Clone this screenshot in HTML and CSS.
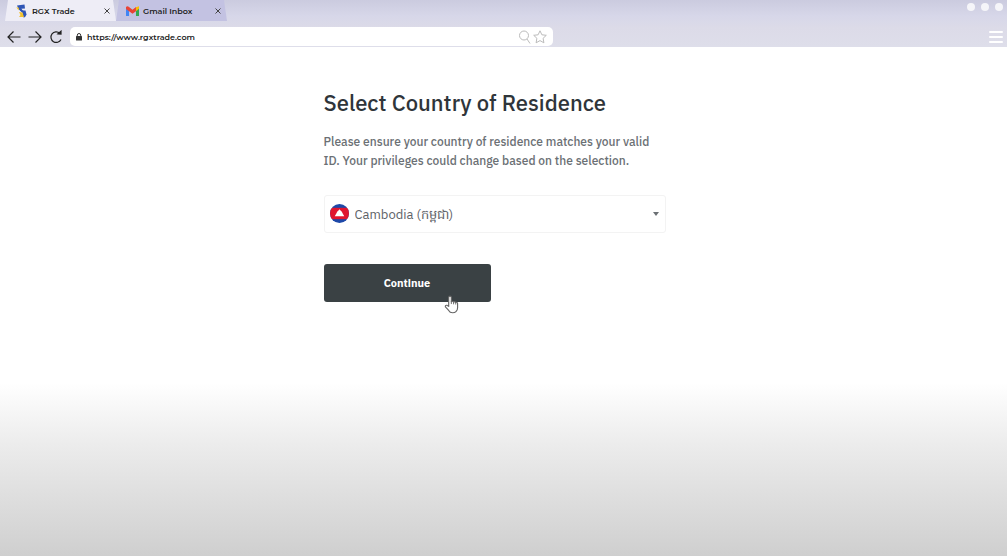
FILE: index.html
```
<!DOCTYPE html>
<html lang="en">
<head>
  <meta charset="UTF-8">
  <meta name="viewport" content="width=device-width, initial-scale=1.0">
  <title>RGX Trade</title>
  <link rel="stylesheet" href="styles.css">
</head>
<body>
  <header class="browser">
    <div class="tab-row">
      <nav class="tabs">
        <div class="tab active">
          <svg class="tab-icon" viewBox="0 0 12 14" aria-hidden="true">
            <path d="M1.500 1.500 9 .5l.5 4-4 .3 3.500 3-2 1.200-4-4z" fill="#2f55b5"/>
            <path d="M.8 3.200 3.800 3.800 3 6.200z" fill="#f2c230"/>
            <path d="M3 3.800h2.500L7 7.500 5 7z" fill="#2f55b5"/>
            <path d="M7.500 6.500h2.500l1 4-1.500 2.800H7.500L7 9.500z" fill="#2f55b5"/>
            <path d="M3.500 8 7 8.500l1.500 4.500H3.500l1.500-2z" fill="#f2c230"/>
          </svg>
          <a class="tab-link" href="#">RGX Trade</a>
          <button class="tab-close" type="button" aria-label="Close RGX Trade">
            <svg viewBox="0 0 6 6"><path d="M.5.5l5 5M5.500.5l-5 5"/></svg>
          </button>
        </div>
        <div class="tab">
          <svg class="tab-icon" viewBox="0 0 12 10" aria-hidden="true">
            <path d="M0 2v7.500h2.800V3z" fill="#4285f4"/>
            <path d="M12 2v7.500H9.200V3z" fill="#34a853"/>
            <path d="M9.200 1.500 12 .5V3L9.200 5.200z" fill="#fbbc04"/>
            <path d="M0 1.500Q.8 0 2.500 1L6 3.800 9.200 1.200v4L6 7.600 0 3.200z" fill="#ea4335"/>
          </svg>
          <a class="tab-link" href="#">Gmail Inbox</a>
          <button class="tab-close" type="button" aria-label="Close Gmail Inbox">
            <svg viewBox="0 0 6 6"><path d="M.5.5l5 5M5.500.5l-5 5"/></svg>
          </button>
        </div>
      </nav>
      <div class="dots"><span></span><span></span><span></span></div>
    </div>

    <div class="toolbar">
      <button class="nav-button" type="button" aria-label="Back">
        <svg viewBox="0 0 14 14"><path d="M13.500 7H1M6.500 1.500 1 7l5.500 5.500"/></svg>
      </button>
      <button class="nav-button" type="button" aria-label="Forward">
        <svg viewBox="0 0 14 14"><path d="M.5 7H13M7.500 1.500 13 7l-5.500 5.500"/></svg>
      </button>
      <button class="nav-button" type="button" aria-label="Reload">
        <svg viewBox="0 0 14 14"><path d="M10.800 3.200A5.300 5.300 0 1 0 12 9.500"/><path d="M9 3.800 12 4V1.200z" fill="#222"/></svg>
      </button>
      <div class="address">
        <svg class="lock" viewBox="0 0 6 8" aria-hidden="true">
          <path d="M1.300 3.500V2.200a1.700 1.700 0 0 1 3.400 0v1.300" fill="none" stroke="#333"/>
          <rect y="3" width="6" height="4.500" rx=".6" fill="#333"/>
        </svg>
        <input class="address-input" type="text" value="https://www.rgxtrade.com" aria-label="Address">
        <button class="address-button" type="button" aria-label="Search">
          <svg viewBox="0 0 14 14"><circle cx="6" cy="5.500" r="4.500"/><path d="M9 9l3 4.500"/></svg>
        </button>
        <button class="address-button" type="button" aria-label="Bookmark">
          <svg viewBox="0 0 14 14"><path d="M7 .8l1.900 4 4.400.5-3.200 3 .8 4.500L7 10.600l-3.900 2.200.8-4.500-3.200-3 4.400-.5z"/></svg>
        </button>
      </div>
      <button class="menu-button" type="button" aria-label="Menu">
        <span></span><span></span><span></span>
      </button>
    </div>
  </header>

  <main class="page">
    <form class="residence">
      <h1>Select Country of Residence</h1>
      <p>Please ensure your country of residence matches your valid ID. Your privileges could change based on the selection.</p>
      <div class="country">
        <svg class="flag" viewBox="0 0 20 20" aria-hidden="true">
          <clipPath id="round"><circle cx="10" cy="10" r="10"/></clipPath>
          <g clip-path="url(#round)">
            <rect width="20" height="20" fill="#1d48a8"/>
            <rect y="4" width="20" height="12" fill="#e0162f"/>
            <path d="M10 5.500l1.300 1.700 1 .8 1.200 2.200 1.500 2.800H5l1.500-2.800L7.700 8l1-.8z" fill="#fff"/>
          </g>
        </svg>
        <select class="country-select" aria-label="Country of residence">
          <option>Cambodia (កម្ពុជា)</option>
        </select>
        <svg class="caret" viewBox="0 0 6 4" aria-hidden="true"><path d="M0 0h6L3 4z" fill="#6b7074"/></svg>
      </div>
      <div class="actions">
        <button class="continue" type="button">Continue</button>
        <svg class="cursor" viewBox="0 0 16 20" aria-hidden="true">
          <path d="M5 12V2.500a1.400 1.400 0 0 1 2.800 0V7q1.200-1 2.300.3 1.300-.8 2.200.5 2-.6 2.200 1.200v4.500q0 2.500-1.700 4-1.300 1.300-3.600 1.300-3 0-4.200-2.500L1.500 12.500Q1 10.500 3 10.800z" fill="#fff" stroke="#666" stroke-width="1.200" stroke-linejoin="round"/>
          <path d="M7.800 6.500v3M10.200 7.300v2.500M12.500 8v2" stroke="#666" fill="none"/>
        </svg>
      </div>
    </form>
  </main>
</body>
</html>
```
FILE: styles.css
```
* {
  box-sizing: border-box;
}
body {
  display: flex;
  flex-direction: column;
  min-height: 100vh;
  margin: 0;
  font-family: "IBM Plex Sans", Roboto, sans-serif;
  color: #2f353a;
}
button {
  padding: 0;
  border: 0;
  background: none;
  cursor: pointer;
}
svg {
  display: block;
}

/* Browser bar */
.browser {
  height: 47px;
  background: linear-gradient(#cbcbdf 0, #d7d7e9 16px, #dcdbe8 28px, #dedeea 100%);
  font-family: Montserrat, Inter, sans-serif;
}
.tab-row {
  display: flex;
  justify-content: space-between;
  height: 27px;
  padding: 0 4px 0 5px;
}
.tabs {
  display: flex;
}
.tab {
  display: flex;
  align-items: center;
  width: 111px;
  height: 21px;
  padding: 0 6px 0 10px;
  background: #c3c2e2;
  clip-path: polygon(3px 0, calc(100% - 3px) 0, 100% 100%, 0 100%);
}
.tab.active {
  background: #eeedf6;
}
.tab-icon {
  width: 13px;
  height: 14px;
  margin-right: 4px;
}
.tab-link {
  flex: 1;
  color: #222;
  font-size: 8px;
  font-weight: 600;
  text-decoration: none;
  white-space: nowrap;
}
.tab-close svg {
  width: 6px;
  height: 6px;
  stroke: #444;
  stroke-width: 1;
}
.dots {
  display: flex;
  gap: 6px;
  padding-top: 3px;
}
.dots span {
  width: 8px;
  height: 8px;
  border-radius: 50%;
  background: #f5f5f9;
}
.toolbar {
  display: flex;
  align-items: center;
  padding: 0 4px 0 7px;
}
.nav-button {
  margin-right: 7px;
}
.nav-button svg {
  width: 14px;
  height: 14px;
  fill: none;
  stroke: #222;
  stroke-width: 1.2;
}
.address {
  display: flex;
  align-items: center;
  width: 48.5%;
  height: 19px;
  padding: 0 6px;
  border-radius: 5px;
  background: #fff;
}
.lock {
  width: 6px;
  height: 8px;
}
.address-input {
  flex: 1;
  min-width: 0;
  padding: 0 5px;
  border: 0;
  background: none;
  color: #222;
  font-family: inherit;
  font-size: 8px;
  font-weight: 600;
  outline: 0;
}
.address-button {
  margin-left: 1px;
}
.address-button svg {
  width: 14px;
  height: 14px;
  fill: none;
  stroke: #bbb;
}
.menu-button {
  display: grid;
  gap: 3px;
  width: 14px;
  margin-left: auto;
}
.menu-button span {
  height: 2px;
  border-radius: 1px;
  background: #fff;
}

/* Country form */
.page {
  flex: 1;
  padding: 41px 34px 16px 16px;
  background: linear-gradient(#fff 0, #fff 66%, #ececec 78%, #cfcfcf 100%);
}
.residence {
  max-width: 342px;
  margin: 0 auto;
}
h1 {
  margin: 0 0 14px;
  font-size: 22px;
  font-weight: 500;
  line-height: 30px;
}
p {
  margin: 0 0 25px;
  color: #6b7074;
  font-size: 12px;
  font-weight: 500;
  line-height: 19px;
}
.country {
  position: relative;
  margin-bottom: 31px;
}
.country-select {
  width: 100%;
  height: 38px;
  padding: 0 24px 0 30px;
  border: 1px solid #f3f3f3;
  border-radius: 3px;
  appearance: none;
  background: #fff;
  color: #5d6267;
  font-family: inherit;
  font-size: 13px;
}
.flag {
  position: absolute;
  top: 9px;
  left: 6px;
  width: 19px;
  height: 19px;
}
.caret {
  position: absolute;
  top: 17px;
  right: 7px;
  width: 6px;
  height: 4px;
}
.actions {
  position: relative;
}
.continue {
  width: 167px;
  height: 38px;
  border-radius: 3px;
  background: #3a4144;
  color: #fff;
  font-family: inherit;
  font-size: 11px;
  font-weight: 700;
}
.cursor {
  position: absolute;
  top: 31px;
  left: 120px;
  width: 15px;
  height: 19px;
}
```
